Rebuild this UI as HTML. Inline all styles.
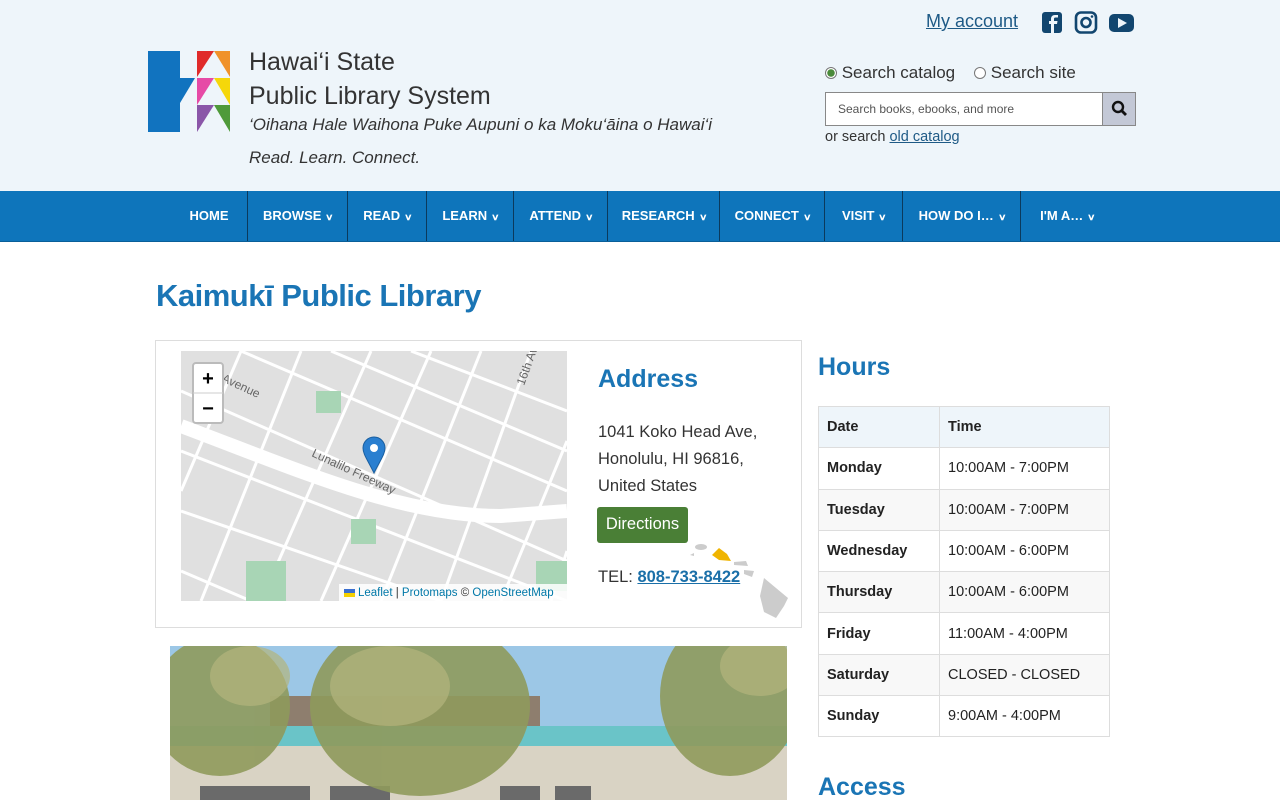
<!DOCTYPE html>
<html><head><meta charset="utf-8"><style>
*{box-sizing:border-box;margin:0;padding:0}
body{width:1280px;height:800px;overflow:hidden;background:#fff;font-family:"Liberation Sans",sans-serif;color:#222}
.hdr{position:absolute;left:0;top:0;width:1280px;height:191px;background:#eef5fa}
.nav{position:absolute;left:0;top:191px;width:1280px;height:51px;background:#0e75bb;border-bottom:1px solid #0a5f99}
.nav div{position:absolute;top:0;height:50px;line-height:50px;color:#fff;font-weight:bold;font-size:13px;text-align:center;border-left:1px solid #0b3a5c}
.nav span{font-size:9px;margin-left:5px;display:inline-block;transform:scaleX(1.3)}
.abs{position:absolute}
h1{position:absolute;left:156px;top:278px;font-size:31px;color:#1a75b5;font-weight:bold;letter-spacing:-0.5px}
.box{position:absolute;left:155px;top:340px;width:647px;height:288px;border:1px solid #ddd}
table{position:absolute;left:818px;top:406px;width:292px;border-collapse:collapse;font-size:14.5px}
td{border:1px solid #ddd;height:41.3px;padding-left:8px}
td:first-child{width:121px;font-weight:bold}
tr:nth-child(odd) td{background:#f8f8f8}
tr:first-child td{background:#eef5fa;font-weight:bold}
tr:nth-child(2) td{background:#fff}
</style></head><body>
<div class="hdr"></div>
<svg class="abs" style="left:148px;top:51px" width="82" height="82" viewBox="0 0 82 82">
<path d="M0 0H32V27H47L32 52V81H0Z" fill="#1173bf"/>
<path d="M49 0H66L49 26Z" fill="#e02a2a"/><path d="M66 0H82V26Z" fill="#f0922a"/>
<path d="M49 27H66L49 54Z" fill="#e64aa6"/><path d="M66 27H82V54Z" fill="#f5d70a"/>
<path d="M49 54H66L49 81Z" fill="#8a56a8"/><path d="M66 54H82V81Z" fill="#4f9a3a"/>
</svg>
<div class="abs" style="left:249px;top:45px;font-size:25px;color:#333;line-height:34px">Hawai‘i State<br>Public Library System</div>
<div class="abs" style="left:249px;top:115px;font-size:17px;font-style:italic;color:#333">‘Oihana Hale Waihona Puke Aupuni o ka Moku‘āina o Hawai‘i</div>
<div class="abs" style="left:249px;top:148px;font-size:17px;font-style:italic;color:#333">Read. Learn. Connect.</div>
<a class="abs" style="left:926px;top:11px;font-size:18px;color:#1e5a86;text-decoration:underline">My account</a>
<svg class="abs" style="left:1041px;top:11px" width="94" height="24" viewBox="0 0 94 24">
<rect x="1" y="1" width="20" height="21" rx="3" fill="#12466f"/><path d="M13 22V13h3l.5-3H13V8c0-1 .4-1.5 1.5-1.5H17V4h-3c-2.5 0-4 1.5-4 4v2H8v3h2v9z" fill="#eef5fa"/>
<rect x="35" y="1.5" width="20" height="20" rx="5" fill="none" stroke="#12466f" stroke-width="2.6"/><circle cx="45" cy="11.5" r="4.5" fill="none" stroke="#12466f" stroke-width="2.6"/><circle cx="51" cy="5.5" r="1.3" fill="#12466f"/>
<rect x="68" y="3" width="25" height="18" rx="5" fill="#12466f"/><path d="M77 7V17L86 12Z" fill="#eef5fa"/>
</svg>
<div class="abs" style="left:825px;top:63px;font-size:17px;color:#333"><span style="display:inline-block;width:12px;height:12px;border-radius:50%;border:1px solid #777;background:radial-gradient(#4a8a3a 50%,#fff 56%);vertical-align:-1px"></span> Search catalog &nbsp; &nbsp;<span style="display:inline-block;width:12px;height:12px;border-radius:50%;border:1px solid #777;background:#fff;vertical-align:-1px"></span> Search site</div>
<div class="abs" style="left:825px;top:92px;width:311px;height:34px;border:1px solid #888;background:#fff;font-size:12px;color:#555;line-height:32px;padding-left:12px">Search books, ebooks, and more</div>
<div class="abs" style="left:1102px;top:93px;width:33px;height:32px;background:#c3c8d6;border-left:1px solid #888"><svg width="33" height="32"><circle cx="15" cy="14" r="5" fill="none" stroke="#111" stroke-width="2.4"/><path d="M19 18l4 4" stroke="#111" stroke-width="2.8"/></svg></div>
<div class="abs" style="left:825px;top:129px;font-size:14.5px;color:#333">or search <span style="color:#1e5a86;text-decoration:underline">old catalog</span></div>
<div class="nav">
<div style="left:170px;width:78px;border-left:none">HOME</div>
<div style="left:247px;width:101px">BROWSE<span>∨</span></div>
<div style="left:347px;width:80px">READ<span>∨</span></div>
<div style="left:426px;width:88px">LEARN<span>∨</span></div>
<div style="left:513px;width:95px">ATTEND<span>∨</span></div>
<div style="left:607px;width:113px">RESEARCH<span>∨</span></div>
<div style="left:719px;width:106px">CONNECT<span>∨</span></div>
<div style="left:824px;width:79px">VISIT<span>∨</span></div>
<div style="left:902px;width:119px">HOW DO I…<span>∨</span></div>
<div style="left:1020px;width:94px">I'M A…<span>∨</span></div>
</div>
<h1>Kaimukī Public Library</h1>
<div class="box"></div>
<svg class="abs" style="left:181px;top:351px" width="386" height="250" viewBox="0 0 386 250">
<rect width="386" height="250" fill="#e0e0e0"/>
<g stroke="#fff" stroke-width="3" fill="none">
<path d="M0 40L386 210M0 100L386 250M0 160L260 250M60 0L386 140M150 0L386 100M230 0L386 60M0 220L70 250"/>
<path d="M20 250L120 0M80 250L190 0M140 250L250 0M200 250L300 0M260 250L350 0M320 250L386 90M0 140L60 0M370 250L386 200"/>
</g>
<path d="M0 75 C120 120 220 165 320 165 L386 160" stroke="#fff" stroke-width="14" fill="none"/>
<rect x="135" y="40" width="25" height="22" fill="#a8d5b5"/><rect x="170" y="168" width="25" height="25" fill="#a8d5b5"/><rect x="65" y="210" width="40" height="40" fill="#a8d5b5"/><rect x="355" y="210" width="31" height="30" fill="#a8d5b5"/>
<text x="130" y="105" transform="rotate(25 130 105)" font-size="12" fill="#666" font-family="Liberation Sans">Lunalilo Freeway</text>
<text x="40" y="30" transform="rotate(25 40 30)" font-size="12" fill="#666" font-family="Liberation Sans">Avenue</text>
<text x="343" y="35" transform="rotate(-70 343 35)" font-size="12" fill="#666" font-family="Liberation Sans">16th Ave</text>
<path d="M193 122C186 108 182 103 182 97a11 11 0 0122 0c0 6-4 11-11 25z" fill="#2a7fd0" stroke="#1a5fa0"/><circle cx="193" cy="97" r="4" fill="#fff"/>
<rect x="12" y="12" width="30" height="60" rx="3" fill="#fff" stroke="#bbb" stroke-width="2"/><line x1="12" y1="42" x2="42" y2="42" stroke="#ccc"/>
<text x="27" y="34" text-anchor="middle" font-size="20" font-weight="bold" font-family="Liberation Sans">+</text><text x="27" y="64" text-anchor="middle" font-size="20" font-weight="bold" font-family="Liberation Sans">−</text>
<rect x="158" y="233" width="228" height="17" fill="#fff" opacity=".85"/>
<rect x="163" y="238" width="11" height="4" fill="#3a6fd0"/><rect x="163" y="242" width="11" height="4" fill="#f5d000"/>
<text x="177" y="245" font-size="11.5" fill="#0078a8" font-family="Liberation Sans">Leaflet <tspan fill="#333">|</tspan> Protomaps <tspan fill="#333">©</tspan> OpenStreetMap</text>
</svg>
<div class="abs" style="left:598px;top:365px;font-size:25px;font-weight:bold;color:#1a75b5">Address</div>
<div class="abs" style="left:598px;top:419px;font-size:16.5px;line-height:27px;color:#333">1041 Koko Head Ave,<br>Honolulu, HI 96816,<br>United States</div>
<div class="abs" style="left:597px;top:507px;width:91px;height:36px;background:#4a7f36;border-radius:3px;color:#fff;font-size:16.5px;line-height:35px;text-align:center">Directions</div>
<svg class="abs" style="left:684px;top:540px" width="110" height="82" viewBox="0 0 110 82">
<ellipse cx="17" cy="7" rx="6" ry="3" fill="#ccc"/><path d="M28 15l7-7 8 6 4 7-12-1z" fill="#f0b400"/>
<path d="M50 22l12-1 2 5-14-1zM60 30l10 1-2 6-8-3z" fill="#ccc"/><path d="M80 38l12 10 12 10-4 8-8 12-12-6-4-16z" fill="#ccc"/><path d="M6 15l4-2v3z" fill="#ccc"/>
</svg>
<div class="abs" style="left:598px;top:568px;font-size:16.5px;color:#333">TEL: <b style="color:#1a6fa8;text-decoration:underline">808-733-8422</b></div>
<div class="abs" style="left:818px;top:353px;font-size:25px;font-weight:bold;color:#1a75b5">Hours</div>
<table>
<tr><td>Date</td><td>Time</td></tr>
<tr><td>Monday</td><td>10:00AM - 7:00PM</td></tr>
<tr><td>Tuesday</td><td>10:00AM - 7:00PM</td></tr>
<tr><td>Wednesday</td><td>10:00AM - 6:00PM</td></tr>
<tr><td>Thursday</td><td>10:00AM - 6:00PM</td></tr>
<tr><td>Friday</td><td>11:00AM - 4:00PM</td></tr>
<tr><td>Saturday</td><td>CLOSED - CLOSED</td></tr>
<tr><td>Sunday</td><td>9:00AM - 4:00PM</td></tr>
</table>
<div class="abs" style="left:818px;top:773px;font-size:25px;font-weight:bold;color:#1a75b5">Access</div>
<svg class="abs" style="left:170px;top:646px" width="617" height="154" viewBox="0 0 617 154">
<rect width="617" height="154" fill="#9cc7e6"/>
<rect x="100" y="50" width="270" height="40" fill="#8e7e6e"/>
<rect x="0" y="80" width="617" height="20" fill="#6ac4c8"/>
<rect x="0" y="100" width="617" height="54" fill="#d9d3c4"/>
<g fill="#6a6a6a"><rect x="30" y="140" width="110" height="14"/><rect x="160" y="140" width="60" height="14"/><rect x="330" y="140" width="40" height="14"/><rect x="385" y="140" width="36" height="14"/></g>
<g fill="#8f9a5c" opacity=".9"><ellipse cx="50" cy="60" rx="70" ry="70"/><ellipse cx="250" cy="60" rx="110" ry="90"/><ellipse cx="560" cy="50" rx="70" ry="80"/></g>
<g fill="#b4b57e" opacity=".7"><ellipse cx="220" cy="40" rx="60" ry="40"/><ellipse cx="80" cy="30" rx="40" ry="30"/><ellipse cx="590" cy="20" rx="40" ry="30"/></g>
</svg>
</body></html>
